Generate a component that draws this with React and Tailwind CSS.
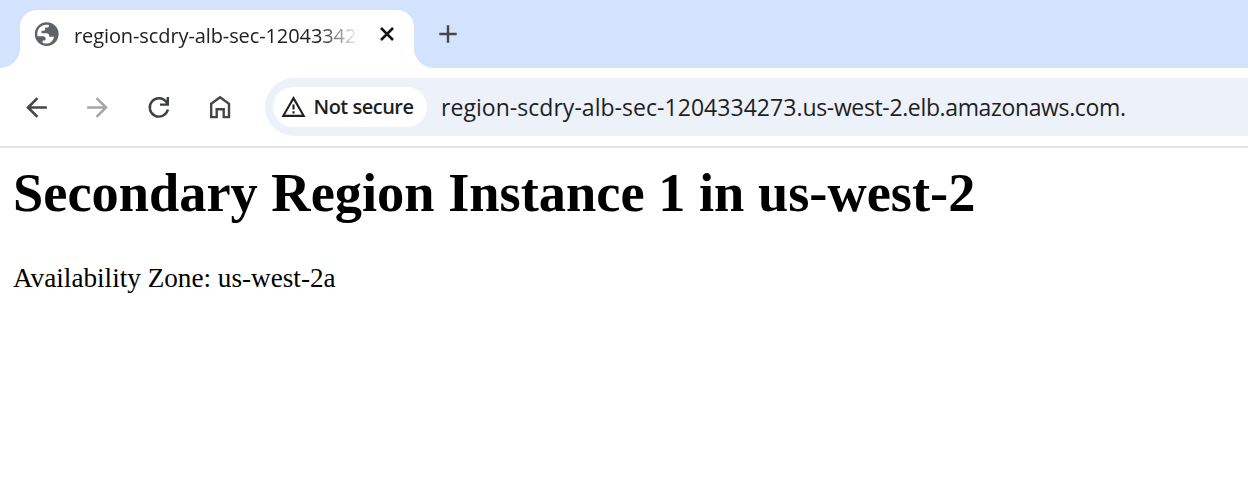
export default function App() {
  return (
    <div className="flex h-[491px] w-full flex-col overflow-hidden bg-white">
      <header className="flex h-[68px] shrink-0 items-end bg-[#d3e2fd]">
        <svg className="h-5 w-5 shrink-0" viewBox="0 0 20 20"><path fill="#fff" d="M20 0v20H0C11 20 20 11 20 0z" /></svg>
        <div className="flex h-[58px] w-[394px] shrink-0 rounded-t-[17px] bg-white pl-[14px] pt-[12px]">
          <svg className="h-[25px] w-[25px] shrink-0" viewBox="0 0 25 25">
            <circle cx="12.7" cy="12.1" r="11.9" fill="#5f6368" />
            <path fill="#fff" d="M3.3 11.2C3.6 6.6 7.3 3 12 2.8c1-.1 2 0 2.9.3v1c0 .9-.6 1.5-1.4 1.5h-2.3v1.7c0 .8-.6 1.4-1.3 1.4H7.5v2.6h5.2c1.5 0 2.5 1 2.5 2.5v1h4.9c-.8 3.7-3.7 6.8-7.4 6.8-1.5 0-2.8-.3-4.1-.9v-2.1h1.6c.9 0 1.5-.6 1.5-1.5 0-1.7-1.1-2.8-2.7-2.8H3.5c-.2-1-.3-2-.2-2.8z" />
          </svg>
          <div className="ml-[15px] w-[285px] overflow-hidden whitespace-nowrap font-['Open_Sans',sans-serif] text-[20px] leading-[27px] text-[#202124] [mask-image:linear-gradient(to_right,black_245px,transparent_285px)]"><span className="tracking-[-0.1px]">region-scdry-alb-sec-1204334273</span></div>
          <svg className="ml-5 mt-[4px] h-4 w-4 shrink-0" viewBox="0 0 16 16"><path d="m2 2 12 12M14 2 2 14" stroke="#111" strokeWidth="2.5" /></svg>
        </div>
        <svg className="h-5 w-5 shrink-0" viewBox="0 0 20 20"><path fill="#fff" d="M0 0v20h20C9 20 0 11 0 0z" /></svg>
        <svg className="mb-[25px] ml-[5px] h-[18px] w-[18px] shrink-0" viewBox="0 0 18 18"><path d="M9 .3v17.4M.3 9h17.4" stroke="#444746" strokeWidth="2.4" /></svg>
      </header>
      <nav className="flex h-[80px] shrink-0 items-center border-b-2 border-[#e4e4e4]">
        <svg className="ml-[21px] h-[31px] w-[31px] shrink-0" viewBox="0 0 24 24"><path fill="#444746" d="M20 11H7.83l5.59-5.59L12 4l-8 8 8 8 1.41-1.41L7.83 13H20v-2z" /></svg>
        <svg className="ml-[30px] h-[31px] w-[31px] shrink-0" viewBox="0 0 24 24"><path fill="#a5a6a6" d="m12 4-1.41 1.41L16.17 11H4v2h12.17l-5.58 5.59L12 20l8-8z" /></svg>
        <svg className="ml-[31px] h-[30px] w-[30px] shrink-0" viewBox="0 0 30 30" fill="none" stroke="#3c4043" strokeWidth="2.4"><path d="M23.9 17.5A9.2 9.2 0 1 1 22.4 10l1.2 2.4M23.8 5v7.6H16" /></svg>
        <svg className="ml-[31px] h-[30px] w-[30px] shrink-0" viewBox="0 0 30 30" fill="none" stroke="#444746" strokeWidth="2.4"><path d="M6.2 11.8 15.1 5.2l8.9 6.6v13.3h-5.3v-7.8h-7v7.8H6.2z" /></svg>
        <div className="ml-[29.5px] flex h-[58px] min-w-0 flex-1 items-center rounded-l-full bg-[#ecf1fa] pl-[8px]">
          <div className="flex h-10 w-[154.5px] shrink-0 items-center rounded-full bg-white pl-[8px]">
            <svg className="h-[25px] w-[25px] shrink-0" viewBox="0 0 24 24" fill="none" stroke="#1f1f1f" strokeWidth="2"><path d="M12 3 21.8 20H2.2zM12 9v4.8M12 15.6v2.2" /></svg>
            <span className="-mt-px ml-[8px] whitespace-nowrap font-['Open_Sans',sans-serif] text-[20px] font-semibold leading-[27px] tracking-[-0.5px] text-[#1f1f1f]">Not secure</span>
          </div>
          <span className="ml-[14px] whitespace-nowrap font-['Open_Sans',sans-serif] text-[23px] leading-[31px] tracking-[-0.36px] text-[#1f1f1f]"><span className="tracking-[0.04px]">region-scdry-alb-sec-1204334273.</span>us-west-2.elb.amazonaws.com.</span>
        </div>
      </nav>
      <main className="flex flex-col items-start pl-[13px] pt-[14px] font-['Liberation_Serif',serif] text-black">
        <h1 className="whitespace-nowrap text-[54.4px] font-bold leading-[62px]">Secondary Region Instance 1 in us-west-2</h1>
        <p className="mt-[39px] whitespace-nowrap text-[27.2px] leading-[31px]">Availability Zone: us-west-2a</p>
      </main>
    </div>
  );
}
